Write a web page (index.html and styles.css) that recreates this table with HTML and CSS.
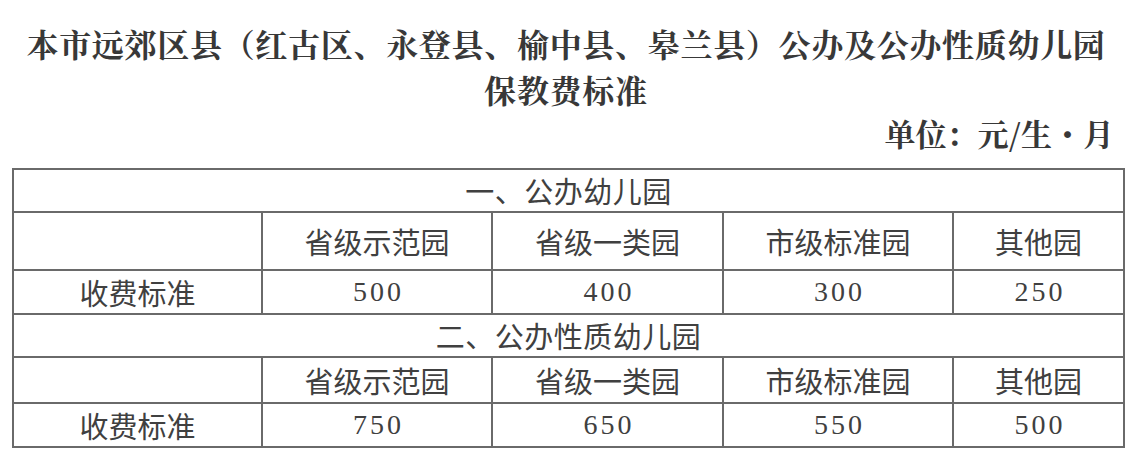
FILE: index.html
```html
<!DOCTYPE html>
<html lang="zh-CN">
<head>
<meta charset="utf-8">
<title>保教费标准</title>
<link rel="stylesheet" href="styles.css">
</head>
<body>
<div class="page">
  <h1 class="title">本市远郊区县（红古区、永登县、榆中县、皋兰县）公办及公办性质幼儿园<br>保教费标准</h1>
  <div class="unit">单位：元/生・月</div>
  <table class="fees">
    <colgroup>
      <col class="c-label">
      <col class="c-a">
      <col class="c-b">
      <col class="c-c">
      <col class="c-d">
    </colgroup>
    <tbody>
      <tr class="r-sec1"><td colspan="5" class="sec">一、公办幼儿园</td></tr>
      <tr class="r-head1"><td></td><td>省级示范园</td><td>省级一类园</td><td>市级标准园</td><td>其他园</td></tr>
      <tr class="r-val1"><td>收费标准</td><td class="num">500</td><td class="num">400</td><td class="num">300</td><td class="num">250</td></tr>
      <tr class="r-sec2"><td colspan="5" class="sec">二、公办性质幼儿园</td></tr>
      <tr class="r-head2"><td></td><td>省级示范园</td><td>省级一类园</td><td>市级标准园</td><td>其他园</td></tr>
      <tr class="r-val2"><td>收费标准</td><td class="num">750</td><td class="num">650</td><td class="num">550</td><td class="num">500</td></tr>
    </tbody>
  </table>
</div>
</body>
</html>
```

FILE: styles.css
```css
html, body {
  margin: 0;
  padding: 0;
  background: #ffffff;
}

.page {
  width: 1132px;
  height: 456px;
  overflow: hidden;
}

.title {
  margin: 0;
  padding-top: 20px;
  font-family: "Noto Serif CJK SC", "Noto Sans CJK SC", serif;
  font-weight: 700;
  font-size: 32px;
  line-height: 46px;
  letter-spacing: 0.7px;
  text-align: center;
  color: #383838;
}

.unit {
  font-family: "Noto Serif CJK SC", "Noto Sans CJK SC", serif;
  font-weight: 700;
  font-size: 31px;
  line-height: 42px;
  text-align: right;
  padding-right: 18px;
  color: #383838;
}

.fees {
  margin-top: 14px;
  margin-left: 12px;
  width: 1111px;
  table-layout: fixed;
  border-collapse: collapse;
  font-family: "Noto Sans CJK SC", sans-serif;
  font-size: 29px;
  color: #404040;
}

.c-label { width: 249px; }
.c-a { width: 230px; }
.c-b { width: 231px; }
.c-c { width: 230px; }
.c-d { width: 171px; }

.fees td {
  border: 2px solid #6a6a6a;
  padding: 0;
  text-align: center;
  vertical-align: middle;
  line-height: 1;
}

.fees .sec {
  letter-spacing: 0.5px;
}

.fees .num {
  font-family: "Liberation Serif", serif;
  font-size: 28px;
  letter-spacing: 3px;
  text-indent: 3px;
}

.r-sec1 { height: 43px; }
.r-head1 { height: 58px; }
.r-val1 { height: 44px; }
.r-sec2 { height: 43px; }
.r-head2 { height: 46px; }
.r-val2 { height: 44px; }
```
